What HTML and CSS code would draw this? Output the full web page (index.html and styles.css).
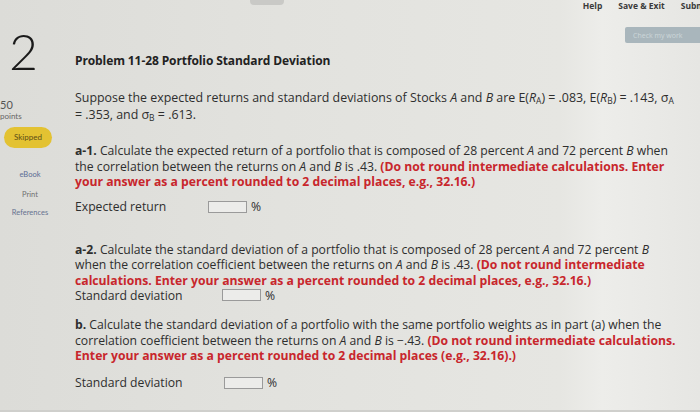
FILE: index.html
```html
<!DOCTYPE html>
<html>
<head>
<meta charset="utf-8">
<link rel="stylesheet" href="styles.css">
</head>
<body>
<div class="page">
  <header class="topbar">
    <div class="tab"></div>
    <nav class="links">
      <span>Help</span>
      <span>Save &amp; Exit</span>
      <span>Submit</span>
    </nav>
  </header>
  <div class="checkrow">
    <button class="check">Check my work</button>
  </div>
  <div class="content">
    <aside class="side">
      <div class="qnum">2</div>
      <div class="pts"><span class="pval">50</span><span class="plab">points</span></div>
      <div class="pill">Skipped</div>
      <div class="tool t1">eBook</div>
      <div class="tool t2">Print</div>
      <div class="tool t3">References</div>
    </aside>
    <main class="main">
      <h1 class="title">Problem 11-28 Portfolio Standard Deviation</h1>
      <p class="intro">Suppose the expected returns and standard deviations of Stocks <i>A</i> and <i>B</i> are E(<i>R</i><sub>A</sub>) = .083, E(<i>R</i><sub>B</sub>) = .143, σ<sub>A</sub> = .353, and σ<sub>B</sub> = .613.</p>

      <p class="q q1"><b>a-1.</b> Calculate the expected return of a portfolio that is composed of 28 percent <i>A</i> and 72 percent <i>B</i> when the correlation between the returns on <i>A</i> and <i>B</i> is .43. <b class="red">(Do not round intermediate calculations. Enter your answer as a percent rounded to 2 decimal places, e.g., 32.16.)</b></p>
      <div class="ans a1"><span class="lab">Expected return</span><span class="box"></span><span class="pct">%</span></div>

      <p class="q q2"><b>a-2.</b> Calculate the standard deviation of a portfolio that is composed of 28 percent <i>A</i> and 72 percent <i>B</i> when the correlation coefficient between the returns on <i>A</i> and <i>B</i> is .43. <b class="red">(Do not round intermediate calculations. Enter your answer as a percent rounded to 2 decimal places, e.g., 32.16.)</b></p>
      <div class="ans a2"><span class="lab">Standard deviation</span><span class="box"></span><span class="pct">%</span></div>

      <p class="q q3"><b>b.</b> Calculate the standard deviation of a portfolio with the same portfolio weights as in part (a) when the correlation coefficient between the returns on <i>A</i> and <i>B</i> is −.43. <b class="red">(Do not round intermediate calculations. Enter your answer as a percent rounded to 2 decimal places (e.g., 32.16).)</b></p>
      <div class="ans a3"><span class="lab">Standard deviation</span><span class="box"></span><span class="pct">%</span></div>
    </main>
  </div>
  <div class="bottom"></div>
</div>
</body>
</html>
```

FILE: styles.css
```css
html, body {
  margin: 0;
  padding: 0;
  width: 700px;
  height: 412px;
  overflow: hidden;
}
body {
  font-family: "Open Sans", Lato, sans-serif;
  color: #2e2e2e;
  background: linear-gradient(90deg, #dcdcd8 0%, #e2e2de 40%, #e6e6e2 80%, #ededea 86%, #e6e6e3 100%);
}
.page {
  position: relative;
  width: 700px;
  height: 412px;
  overflow: hidden;
}
.topbar {
  height: 20px;
  display: flex;
  justify-content: space-between;
  align-items: flex-start;
}
.tab {
  margin-left: 250px;
  width: 34px;
  height: 5px;
  border-radius: 0 0 4px 4px;
  background: #c9c9c6;
}
.links {
  display: flex;
  gap: 16px;
  margin-right: -11px;
  font-size: 8.5px;
  font-weight: 700;
  color: #3a3a3a;
}
.checkrow {
  display: flex;
  justify-content: flex-end;
  height: 17px;
  margin-top: 7px;
}
.check {
  flex: none;
  width: 90px;
  height: 16px;
  margin-right: -15px;
  border: 0;
  border-radius: 2px;
  background: #a9b6bc;
  color: #cdd6da;
  font-family: "Open Sans", sans-serif;
  font-size: 7px;
  padding: 0 0 0 8px;
  text-align: left;
}
.content {
  display: grid;
  grid-template-columns: 75px 1fr;
  margin-top: -13px;
}
.side {
  display: flex;
  flex-direction: column;
  font-family: Lato, sans-serif;
}
.qnum {
  margin-left: 9px;
  font-size: 50px;
  font-weight: 300;
  line-height: 40px;
  height: 44px;
  color: #1a1a1a;
}
.pts {
  display: flex;
  flex-direction: column;
  margin-top: 23px;
  color: #555;
}
.pval {
  font-size: 11px;
  line-height: 13px;
  color: #555;
}
.plab {
  font-size: 8px;
  line-height: 10px;
  color: #666;
}
.pill {
  margin: 6px 0 0 4px;
  width: 48px;
  height: 21px;
  border-radius: 11px;
  background: #e3c232;
  color: #5e4e16;
  font-size: 8px;
  line-height: 21px;
  text-align: center;
}
.tool {
  width: 60px;
  text-align: center;
  font-size: 7.5px;
  line-height: 10px;
}
.t1 { margin-top: 22px; color: #5b6c94; }
.t2 { margin-top: 10px; color: #707070; }
.t3 { margin-top: 8px; color: #677290; }
.main {
  padding-right: 20px;
}
.title {
  margin: 22px 0 0;
  font-size: 12px;
  font-weight: 700;
  line-height: 16px;
  color: #222;
  letter-spacing: -0.1px;
}
.intro, .q {
  margin: 0;
  font-size: 12.2px;
  line-height: 15.5px;
  letter-spacing: 0;
}
.intro {
  margin-top: 20px;
  line-height: 17px;
  font-size: 12.4px;
}
sub {
  font-size: 8.5px;
  vertical-align: -2px;
  line-height: 0;
}
.q1 { margin-top: 20px; }
.q b { font-weight: 700; }
.red { color: #c8262c; }
.ans {
  display: flex;
  align-items: center;
  height: 14px;
  font-size: 12.2px;
}
.a1 { margin-top: 10px; }
.q2 { margin-top: 28px; }
.a2 { margin-top: 0; }
.q3 { margin-top: 15px; }
.a3 { margin-top: 12px; }
.lab { width: 133px; }
.a2 .lab { width: 147px; }
.a3 .lab { width: 149px; }
.box {
  width: 37px;
  height: 10px;
  border: 1px solid #9a9a9a;
  background: #ececea;
}
.pct {
  margin-left: 4px;
}
.bottom {
  position: absolute;
  left: 0;
  right: 0;
  bottom: 0;
  height: 2px;
  background: #cfcfcc;
}
```
